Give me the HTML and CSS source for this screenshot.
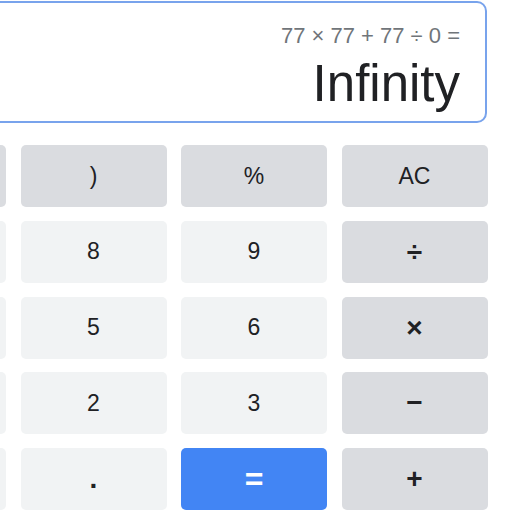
FILE: index.html
```html
<!DOCTYPE html>
<html lang="en">
<head>
    <meta charset="UTF-8">
    <meta name="viewport" content="width=device-width, initial-scale=1.0">
    <title>Calculator</title>
    <link rel="stylesheet" href="styles.css">
</head>
<body>
    <div class="calc">
        <div class="display">
            <div class="expr">77 × 77 + 77 ÷ 0 =</div>
            <div class="result">Infinity</div>
        </div>

        <div class="keys">
            <button class="key fn">(</button>
            <button class="key fn">)</button>
            <button class="key fn">%</button>
            <button class="key fn">AC</button>

            <button class="key">7</button>
            <button class="key">8</button>
            <button class="key">9</button>
            <button class="key fn op">÷</button>

            <button class="key">4</button>
            <button class="key">5</button>
            <button class="key">6</button>
            <button class="key fn op">×</button>

            <button class="key">1</button>
            <button class="key">2</button>
            <button class="key">3</button>
            <button class="key fn op">−</button>

            <button class="key">0</button>
            <button class="key dot">.</button>
            <button class="key equals">=</button>
            <button class="key fn op">+</button>
        </div>
    </div>
</body>
</html>
```

FILE: styles.css
```css
body {
    margin: 0;
    padding: 0;
    background: #fff;
    font-family: "Liberation Sans", Arial, sans-serif;
    overflow: hidden;
}

.calc {
    width: 627px;
    margin: 1px 0 0 -140px;
}

.display {
    height: 122px;
    box-sizing: border-box;
    border: 2px solid #78a3ec;
    border-radius: 10px;
    padding: 20px 25px 0 0;
    text-align: right;
}

.expr {
    font-size: 22px;
    line-height: 25px;
    color: #70757a;
}

.result {
    margin-top: 7px;
    font-size: 51px;
    line-height: 57px;
    color: #202124;
}

.keys {
    display: grid;
    grid-template-columns: repeat(4, 146px);
    grid-auto-rows: 62px;
    column-gap: 14.5px;
    row-gap: 13.75px;
    margin-top: 22px;
}

.key {
    border: none;
    border-radius: 5px;
    background-color: #f1f3f4;
    color: #202124;
    font-family: inherit;
    font-size: 23px;
    padding: 0;
    display: flex;
    justify-content: center;
    align-items: center;
}

.key.fn {
    background-color: #dadce0;
}

.key.op {
    font-size: 28px;
    font-weight: bold;
}

.key.dot {
    font-size: 28px;
    font-weight: bold;
}

.key.equals {
    background-color: #4285f4;
    color: #fff;
    font-weight: bold;
    font-size: 32px;
}
```
